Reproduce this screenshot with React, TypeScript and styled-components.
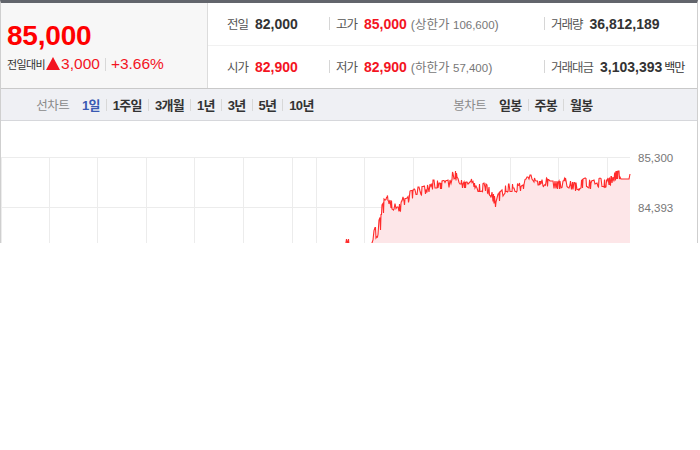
import React from "react";
import styled, { createGlobalStyle } from "styled-components";

const Global = createGlobalStyle`
  html, body { margin: 0; padding: 0; background: #fff; }
  body { font-family: "Liberation Sans", "Noto Sans CJK KR", sans-serif; }
`;

const RED = "#f3141f";

const Widget = styled.div`
  width: 698px;
  height: 243px;
  box-sizing: border-box;
  border-top: 3px solid #62656c;
  border-left: 1px solid #cfcfcf;
  border-right: 1px solid #cfcfcf;
  overflow: hidden;
  font-family: "Liberation Sans", "Noto Sans CJK KR", sans-serif;
`;

const Header = styled.div`
  display: grid;
  grid-template-columns: 207px 1fr;
  height: 86px;
  box-sizing: border-box;
  border-bottom: 1px solid #c9c9c9;
`;

const PricePanel = styled.div`
  background: #f7f7f7;
  border-right: 1px solid #dcdcdc;
  padding: 19px 0 0 6px;
  box-sizing: border-box;
`;

const BigPrice = styled.div`
  color: #ff0000;
  font-size: 28px;
  font-weight: 700;
  line-height: 28px;
  letter-spacing: -0.2px;
`;

const ChangeRow = styled.div`
  display: flex;
  align-items: baseline;
  margin-top: 5px;
`;

const SmallLabel = styled.span`
  font-family: "Noto Sans CJK KR", sans-serif;
  font-size: 11px;
  color: #333;
  letter-spacing: -0.6px;
  margin-right: 1px;
`;

const ChangeValue = styled.span`
  color: ${RED};
  font-size: 15.5px;
  line-height: 18px;
`;

const Tri = styled.span`
  display: inline-block;
  width: 0;
  height: 0;
  border-left: 7px solid transparent;
  border-right: 7px solid transparent;
  border-bottom: 13px solid ${RED};
  margin-right: 1px;
  align-self: center;
  transform: translateY(-1px);
`;

const ThinSep = styled.span<{ $h?: number; $m?: number }>`
  display: inline-block;
  width: 1px;
  height: ${(p) => p.$h ?? 12}px;
  background: #d8d8d8;
  margin: 0 ${(p) => p.$m ?? 6}px;
  align-self: center;
`;

const InfoPanel = styled.div`
  display: grid;
  grid-template-rows: 1fr 1fr;
`;

const InfoRow = styled.div<{ $last?: boolean }>`
  display: grid;
  grid-template-columns: 121px 215px 1fr;
  align-items: center;
  border-bottom: ${(p) => (p.$last ? "none" : "1px solid #f1f1f1")};
`;

const Cell = styled.div<{ $first?: boolean }>`
  display: flex;
  align-items: center;
  white-space: nowrap;
  padding-left: ${(p) => (p.$first ? "19px" : "0")};
`;

const CellSep = styled.span`
  display: inline-block;
  width: 1px;
  height: 13px;
  background: #d6d6d6;
  margin-right: 6px;
`;

const Label = styled.span`
  font-family: "Noto Sans CJK KR", sans-serif;
  font-size: 12.5px;
  color: #555;
  letter-spacing: -1px;
  margin-right: 7px;
`;

const Value = styled.span<{ $red?: boolean }>`
  font-size: 14px;
  font-weight: 700;
  color: ${(p) => (p.$red ? RED : "#333")};
`;

const Note = styled.span`
  font-size: 12.5px;
  color: #777;
  margin-left: 4px;
  & small {
    font-size: 11.5px;
  }
`;

const Unit = styled.span`
  font-family: "Noto Sans CJK KR", sans-serif;
  font-size: 12px;
  color: #333;
  letter-spacing: -1px;
  margin-left: 2px;
`;

const TabBar = styled.div`
  display: grid;
  grid-template-columns: 1fr 1fr;
  height: 32px;
  box-sizing: border-box;
  background: #eff0f4;
  border-bottom: 1px solid #d6d7db;
`;

const TabGroup = styled.div`
  display: flex;
  align-items: center;
  justify-content: center;
`;

const GroupTitle = styled.span`
  font-family: "Noto Sans CJK KR", sans-serif;
  font-size: 12.5px;
  color: #8a8a8a;
  letter-spacing: -0.6px;
  margin-right: 13px;
`;

const Tab = styled.span<{ $active?: boolean }>`
  font-family: "Liberation Sans", "Noto Sans CJK KR", sans-serif;
  font-size: 13px;
  font-weight: 700;
  letter-spacing: -0.7px;
  color: ${(p) => (p.$active ? "#3a5ab3" : "#333")};
`;

const ChartBox = styled.div`
  height: 124px;
`;

const ChartSvg = styled.svg`
  display: block;
`;

type Pt = [number, number];

const anchors: Pt[] = [
  [372, 242], [375, 233], [378, 228], [381, 220], [382, 207], [385, 203],
  [388, 196], [390, 203], [393, 205], [396, 204], [398, 208], [400, 206],
  [403, 200], [407, 199], [410, 194], [413, 193], [416, 190], [420, 190],
  [425, 189], [430, 187], [433, 183], [440, 184], [450, 183], [452, 175],
  [455, 174], [457, 178], [460, 183], [468, 183], [470, 181], [475, 187],
  [480, 187], [485, 186], [490, 191], [494, 199], [496, 205], [498, 197],
  [502, 193], [506, 187], [515, 187], [520, 186], [526, 182], [528, 178],
  [532, 178], [536, 184], [540, 184], [545, 180], [550, 184], [560, 184],
  [565, 181], [570, 184], [575, 186], [580, 184], [585, 181], [590, 184],
  [595, 183], [600, 181], [605, 183], [610, 180], [614, 177], [616, 174],
  [619, 174], [621, 178], [629, 178], [630, 173],
];

function interp(x: number): number {
  for (let i = 0; i < anchors.length - 1; i++) {
    const [x0, y0] = anchors[i];
    const [x1, y1] = anchors[i + 1];
    if (x >= x0 && x <= x1) {
      const t = x1 === x0 ? 0 : (x - x0) / (x1 - x0);
      return y0 + (y1 - y0) * t;
    }
  }
  return anchors[anchors.length - 1][1];
}

function buildPoints(): Pt[] {
  let seed = 98765;
  const rnd = () => {
    seed = (seed * 1103515245 + 12345) % 2147483648;
    return seed / 2147483648;
  };
  const pts: Pt[] = [
    [316, 300], [343, 262], [345.5, 245], [346.5, 238], [347.5, 243],
    [348.5, 238], [349.5, 250], [352, 265], [369, 262], [371, 246],
  ];
  let j = 0;
  for (let x = 372; x <= 630; x += 1) {
    const base = interp(x);
    if (x >= 620) {
      pts.push([x, base]);
      continue;
    }
    if (rnd() < 0.6) {
      const r = rnd();
      j = r < 0.3 ? -4 : r < 0.45 ? 0 : r < 0.8 ? 3.5 : -2;
    }
    const amp = x < 385 ? 1.6 : 1;
    pts.push([x, Math.round((base + j * amp) * 2) / 2]);
    if (rnd() < 0.4) {
      const j2 = rnd() < 0.5 ? 4 : -4;
      pts.push([x + 0.5, Math.round((base + j2 * amp) * 2) / 2]);
    }
  }
  return pts;
}

const linePts = buildPoints();
const lineD = linePts.map((p, i) => `${i ? "L" : "M"}${p[0]} ${p[1]}`).join(" ");
const fillD = `${lineD} L630 300 L316 300 Z`;

const vLines = [1, 49, 97, 146, 194, 243, 292, 316, 364, 413, 461, 510, 558, 607];
const hLines = [156, 206];

const Chart: React.FC = () => (
  <ChartSvg width={696} height={124} viewBox="1 120 696 124">
    {hLines.map((y) => (
      <line key={y} x1={0} x2={630} y1={y + 0.5} y2={y + 0.5} stroke="#ececec" strokeWidth={1} />
    ))}
    {vLines.map((x) => (
      <line key={x} x1={x + 0.5} x2={x + 0.5} y1={156} y2={250} stroke="#ececec" strokeWidth={1} />
    ))}
    <path d={fillD} fill="#fde6e8" />
    <path d={lineD} fill="none" stroke="#ff2b2b" strokeWidth={1.1} strokeLinejoin="miter" />
    <text x={638} y={161} fontSize={11.5} fill="#777" fontFamily="Liberation Sans, sans-serif">85,300</text>
    <text x={638} y={211} fontSize={11.5} fill="#777" fontFamily="Liberation Sans, sans-serif">84,393</text>
  </ChartSvg>
);

const App: React.FC = () => (
  <>
    <Global />
    <Widget>
      <Header>
        <PricePanel>
          <BigPrice>85,000</BigPrice>
          <ChangeRow>
            <SmallLabel>전일대비</SmallLabel>
            <Tri />
            <ChangeValue>3,000</ChangeValue>
            <ThinSep $h={13} $m={5} />
            <ChangeValue>+3.66%</ChangeValue>
          </ChangeRow>
        </PricePanel>
        <InfoPanel>
          <InfoRow>
            <Cell $first>
              <Label>전일</Label>
              <Value>82,000</Value>
            </Cell>
            <Cell>
              <CellSep />
              <Label>고가</Label>
              <Value $red>85,000</Value>
              <Note>(상한가 <small>106,600</small>)</Note>
            </Cell>
            <Cell>
              <CellSep />
              <Label>거래량</Label>
              <Value>36,812,189</Value>
            </Cell>
          </InfoRow>
          <InfoRow $last>
            <Cell $first>
              <Label>시가</Label>
              <Value $red>82,900</Value>
            </Cell>
            <Cell>
              <CellSep />
              <Label>저가</Label>
              <Value $red>82,900</Value>
              <Note>(하한가 <small>57,400</small>)</Note>
            </Cell>
            <Cell>
              <CellSep />
              <Label>거래대금</Label>
              <Value>3,103,393</Value>
              <Unit>백만</Unit>
            </Cell>
          </InfoRow>
        </InfoPanel>
      </Header>
      <TabBar>
        <TabGroup>
          <GroupTitle>선차트</GroupTitle>
          <Tab $active>1일</Tab>
          <ThinSep />
          <Tab>1주일</Tab>
          <ThinSep />
          <Tab>3개월</Tab>
          <ThinSep />
          <Tab>1년</Tab>
          <ThinSep />
          <Tab>3년</Tab>
          <ThinSep />
          <Tab>5년</Tab>
          <ThinSep />
          <Tab>10년</Tab>
        </TabGroup>
        <TabGroup>
          <GroupTitle>봉차트</GroupTitle>
          <Tab>일봉</Tab>
          <ThinSep />
          <Tab>주봉</Tab>
          <ThinSep />
          <Tab>월봉</Tab>
        </TabGroup>
      </TabBar>
      <ChartBox>
        <Chart />
      </ChartBox>
    </Widget>
  </>
);

export default App;
